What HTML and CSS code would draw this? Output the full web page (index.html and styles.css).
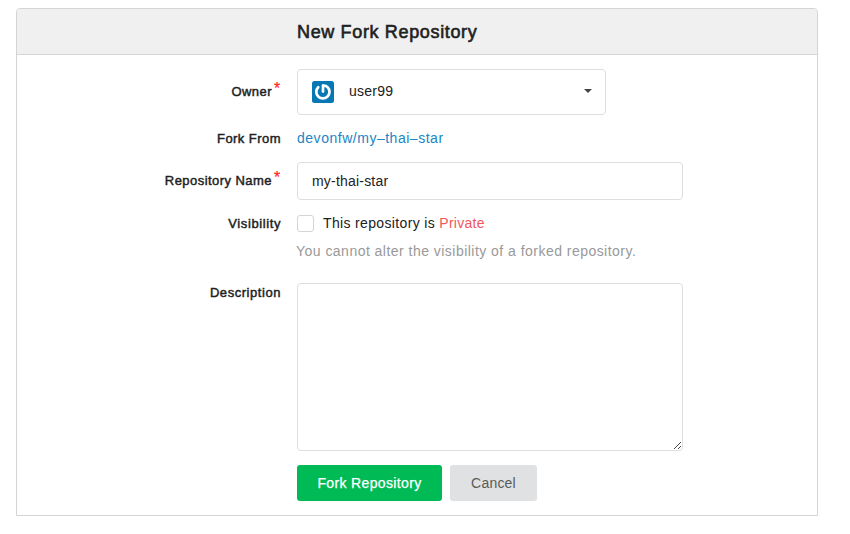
FILE: index.html
```html
<!DOCTYPE html>
<html lang="en">
<head>
<meta charset="utf-8">
<title>New Fork Repository</title>
<link rel="stylesheet" href="styles.css">
</head>
<body>
<form class="panel">
  <h1 class="header">New Fork Repository</h1>
  <div class="body">
    <div class="row owner">
      <span class="label l-owner">Owner<i class="req">*</i></span>
      <div class="select">
        <svg class="avatar" viewBox="0 0 22 22"><rect width="22" height="22" rx="2.5" fill="#0878b5"/><path d="M6.2 6.2A6.6 6.6 0 1 0 15.6 6.2Q14.2 4.6 11.4 4.6" fill="none" stroke="#fff" stroke-width="2.7" stroke-linecap="round"/><path d="M11 4.6V10.6" stroke="#fff" stroke-width="2.7" stroke-linecap="round"/></svg>
        <span class="user">user99</span>
        <svg class="caret" viewBox="0 0 8 4"><path d="M0 0H8L4 4Z" fill="#444"/></svg>
      </div>
    </div>
    <div class="row from">
      <span class="label l-from">Fork From</span>
      <a class="link">devonfw/my–thai–star</a>
    </div>
    <div class="row name">
      <span class="label l-name">Repository Name<i class="req">*</i></span>
      <div class="input"><span class="value">my-thai-star</span></div>
    </div>
    <div class="row visibility">
      <span class="label l-vis">Visibility</span>
      <span class="box"></span>
      <span class="vis">This repository is <span class="private">Private</span></span>
    </div>
    <div class="row help"><span class="help-text">You cannot alter the visibility of a forked repository.</span></div>
    <div class="row description">
      <span class="label l-desc">Description</span>
      <div class="textarea"><svg class="grip" viewBox="0 0 9 9"><path d="M1 8L8 1M5 8L8 5" stroke="#444" stroke-width="1"/></svg></div>
    </div>
    <div class="row actions">
      <span class="button primary">Fork Repository</span>
      <span class="button cancel">Cancel</span>
    </div>
  </div>
</form>
</body>
</html>
```

FILE: styles.css
```css
* { box-sizing: border-box; }
body {
  margin: 0;
  padding: 8px 0 0 16px;
  background: #fff;
  color: #212121;
  font: 14px/20px "Liberation Sans", Arial, sans-serif;
  white-space: nowrap;
}
.panel {
  width: 802px;
  height: 508px;
  border: 1px solid #d4d4d5;
  border-radius: 4px 4px 0 0;
}
.header {
  height: 46px;
  margin: 0;
  padding-left: 280px;
  background: #f0f0f0;
  border-bottom: 1px solid #d4d4d5;
  border-radius: 3px 3px 0 0;
  font-size: 18px;
  font-weight: 400;
  line-height: 46px;
  letter-spacing: .65px;
  -webkit-text-stroke: .6px;
}
.body { padding-top: 14px; }
.row { display: flex; }
.label {
  display: flex;
  justify-content: flex-end;
  width: 264px;
  margin-right: 16px;
  font-size: 13px;
  letter-spacing: .45px;
  -webkit-text-stroke: .45px;
}
.req {
  width: 9px;
  margin-top: -3px;
  padding-left: 2px;
  color: #f22;
  font-size: 16px;
  font-style: normal;
  letter-spacing: 0;
  -webkit-text-stroke: .2px;
}
.owner { height: 46px; margin-bottom: 14px; }
.l-owner { padding-top: 13px; }
.select {
  display: flex;
  align-items: center;
  width: 309px;
  padding: 0 13px 0 14px;
  border: 1px solid #dededf;
  border-radius: 4px;
}
.avatar { width: 22px; height: 22px; }
.user { margin: -2px 0 0 15px; letter-spacing: .25px; }
.caret { width: 8px; height: 4px; margin: -2px 0 0 auto; }
.from { height: 20px; margin-bottom: 13px; }
.link { margin-top: -1px; color: #2185c5; letter-spacing: .52px; }
.name { height: 38px; margin-bottom: 13px; }
.l-name { padding-top: 9px; }
.input {
  width: 386px;
  padding: 8px 14px;
  border: 1px solid #dededf;
  border-radius: 4px;
}
.value { letter-spacing: .2px; }
.visibility { height: 20px; margin-bottom: 8px; }
.l-vis { padding-top: 1px; letter-spacing: .6px; }
.box {
  width: 17px;
  height: 17px;
  margin: 2px 9px 0 0;
  border: 1px solid #d4d4d5;
  border-radius: 3px;
}
.vis { letter-spacing: .35px; }
.private { color: #f0565c; letter-spacing: .25px; }
.help { height: 20px; margin-bottom: 22px; padding-left: 279px; color: #999; }
.help-text { letter-spacing: .47px; }
.description { height: 168px; margin-bottom: 14px; }
.l-desc { letter-spacing: .55px; }
.textarea {
  display: flex;
  align-items: flex-end;
  justify-content: flex-end;
  width: 386px;
  border: 1px solid #dededf;
  border-radius: 4px;
}
.grip { width: 9px; height: 9px; }
.actions { gap: 8px; padding-left: 280px; }
.button {
  height: 36px;
  border-radius: 3px;
  line-height: 36px;
  text-align: center;
}
.primary { width: 145px; background: #00bb55; color: #fff; letter-spacing: .35px; -webkit-text-stroke: .25px; }
.cancel { width: 87px; background: #e0e1e2; color: #5a5a5a; letter-spacing: .2px; }
```
